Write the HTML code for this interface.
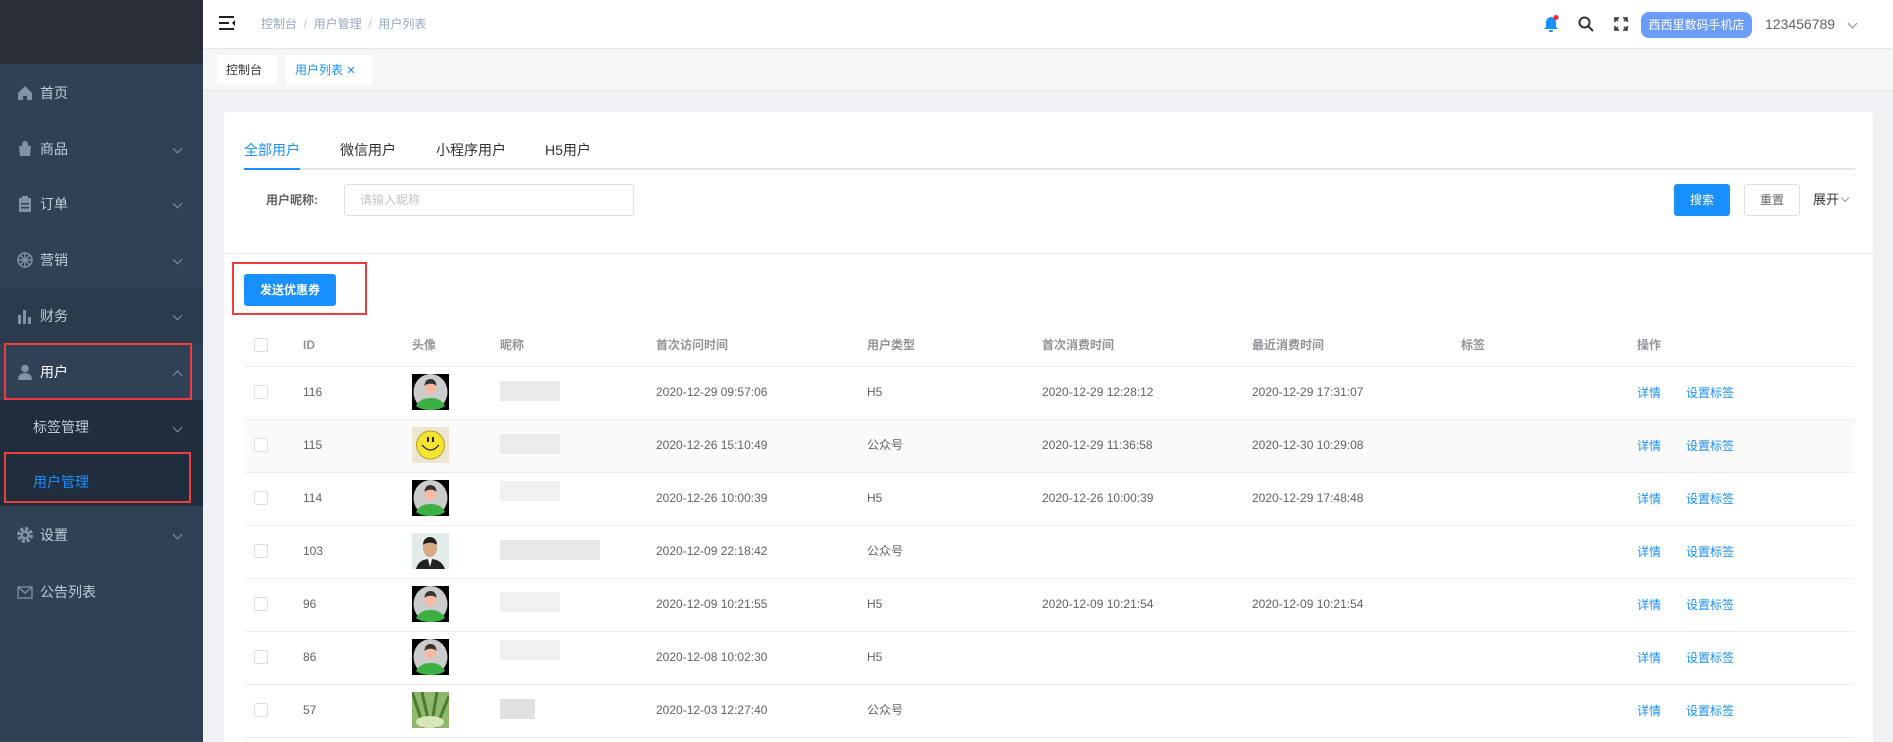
<!DOCTYPE html>
<html style="width:1893px;height:742px;overflow:hidden"><head><meta charset="utf-8"><style>
*{margin:0;padding:0;box-sizing:border-box}
body{width:1893px;height:742px;overflow:hidden;background:#f0f2f5;font-family:"Liberation Sans","Noto Sans CJK SC",sans-serif;position:relative;color:#606266}
.abs{position:absolute}
#side{left:0;top:0;width:203px;height:742px;background:#304156}
#logo{left:0;top:0;width:203px;height:64px;background:#2b2f3a}
.mi{position:absolute;left:0;width:203px;height:56px;line-height:56px;color:#bfcbd9;font-size:14px;padding-left:40px}
.mi .ic{position:absolute;left:17px;top:20px;width:16px;height:16px}
.mi .ar{position:absolute;right:22px;top:24px;width:7px;height:7px;border-right:1px solid #8391a5;border-bottom:1px solid #8391a5;transform:rotate(45deg)}
.mi .ar.up{transform:rotate(-135deg);top:28px}
#sub{left:0;top:400px;width:203px;height:106px;background:#1f2d3d}
.rb{position:absolute;border:2px solid #f03c3c}
#hdr{left:203px;top:0;width:1690px;height:49px;background:#fff;border-bottom:1px solid #e6e6e6;box-shadow:0 1px 3px rgba(0,21,41,.06)}
#tabs{left:203px;top:49px;width:1690px;height:42px;background:#f5f6f8;border-bottom:1px solid #e4e6ea}
.tab{position:absolute;top:6px;height:30px;line-height:30px;background:#fff;font-size:12px;padding:0 9px;color:#333}
#card{left:223px;top:111px;width:1651px;height:631px;background:#fff;border:1px solid #ebeef5;border-bottom:none;border-radius:4px 4px 0 0}
.t{position:absolute;font-size:12px;line-height:14px;white-space:nowrap}
.hd{color:#909399;font-weight:bold}
.line{position:absolute;left:244px;width:1611px;height:1px;background:#ebeef5}
.cb{position:absolute;left:254px;width:14px;height:14px;border:1px solid #dcdfe6;border-radius:2px;background:#fff}
.blue{color:#1890ff}
.av{position:absolute;left:412px;width:37px;height:36px;overflow:hidden}
.blur{position:absolute;height:20px;background:#e6e6e6}
</style></head><body>
<div id="side" class="abs"></div>
<div id="logo" class="abs"></div>
<div id="sub" class="abs"></div>
<div class="mi" style="top:65px;color:#bfcbd9"><svg class="ic" viewBox="0 0 16 16"><path d="M8 1L1 8v7h5v-4h4v4h5V8z" fill="#8391a5"/></svg>首页</div>
<div class="mi" style="top:121px"><svg class="ic" viewBox="0 0 16 16"><path d="M5 5V3a3 3 0 016 0v2h3l-1 10H3L2 5z" fill="#8391a5"/></svg>商品<i class="ar"></i></div>
<div class="mi" style="top:176px"><svg class="ic" viewBox="0 0 16 16"><rect x="2" y="2" width="12" height="14" fill="#8391a5"/><rect x="5" y="0" width="6" height="3" fill="#8391a5"/><rect x="4" y="7" width="8" height="1.5" fill="#304156"/><rect x="4" y="11" width="8" height="1.5" fill="#304156"/></svg>订单<i class="ar"></i></div>
<div class="mi" style="top:232px"><svg class="ic" viewBox="0 0 16 16" fill="none" stroke="#8391a5" stroke-width="1.4"><circle cx="8" cy="8" r="7"/><path d="M8 1v14M1 8h14M3 3l10 10M13 3L3 13"/></svg>营销<i class="ar"></i></div>
<div class="mi" style="top:288px;background:#2b3a4d"><svg class="ic" viewBox="0 0 16 16" fill="#8391a5"><rect x="1" y="7" width="3" height="9"/><rect x="6" y="2" width="3" height="14"/><rect x="11" y="9" width="3" height="7"/></svg>财务<i class="ar"></i></div>
<div class="mi" style="top:344px;color:#fff;background:#304156"><svg class="ic" viewBox="0 0 16 16" fill="#8391a5"><circle cx="8" cy="4.5" r="3.8"/><path d="M1 16c0-5 3-7 7-7s7 2 7 7z"/></svg>用户<i class="ar up"></i></div>
<div class="mi" style="top:400px;padding-left:33px;height:55px;line-height:55px">标签管理<i class="ar"></i></div>
<div class="mi" style="top:455px;padding-left:33px;height:54px;line-height:54px;color:#1890ff">用户管理</div>
<div class="mi" style="top:507px"><svg class="ic" viewBox="0 0 16 16"><circle cx="8" cy="8" r="6" fill="none" stroke="#8391a5" stroke-width="4" stroke-dasharray="3 1.7"/><circle cx="8" cy="8" r="4.5" fill="#8391a5"/><circle cx="8" cy="8" r="2" fill="#304156"/></svg>设置<i class="ar"></i></div>
<div class="mi" style="top:564px"><svg class="ic" viewBox="0 0 16 16" fill="none" stroke="#8391a5" stroke-width="1.3"><rect x="1" y="3" width="14" height="11"/><path d="M1 3l7 6 7-6"/></svg>公告列表</div>
<div class="rb" style="left:4px;top:343px;width:188px;height:57px"></div>
<div class="rb" style="left:4px;top:452px;width:187px;height:51px"></div>

<div id="hdr" class="abs"></div>
<svg class="abs" style="left:219px;top:16px" width="16" height="14" viewBox="0 0 16 14"><rect x="0" y="0" width="15" height="2" fill="#222"/><rect x="0" y="6" width="10" height="2" fill="#222"/><rect x="0" y="12" width="15" height="2" fill="#222"/><path d="M16 4l-3 3 3 3z" fill="#222"/></svg>
<div class="t" style="left:261px;top:17px;font-size:12px;color:#97a8be">控制台 &nbsp;<span style="color:#c0c4cc">/</span>&nbsp; 用户管理 &nbsp;<span style="color:#c0c4cc">/</span>&nbsp; 用户列表</div>
<svg class="abs" style="left:1543px;top:15px" width="16" height="18" viewBox="0 0 16 18"><path d="M8 2a5 5 0 00-5 5v5l-2 2h14l-2-2V7a5 5 0 00-5-5z" fill="#1890ff"/><rect x="6" y="15" width="4" height="2" rx="1" fill="#1890ff"/><circle cx="13" cy="2.5" r="2.5" fill="#f5222d"/></svg>
<svg class="abs" style="left:1578px;top:16px" width="16" height="16" viewBox="0 0 16 16" fill="none" stroke="#333" stroke-width="2"><circle cx="6.5" cy="6.5" r="5"/><path d="M10 10l5 5"/></svg>
<svg class="abs" style="left:1614px;top:17px" width="14" height="14" viewBox="0 0 14 14" fill="none" stroke="#333" stroke-width="1.6"><path d="M1 5V1h4M9 1h4v4M13 9v4H9M5 13H1V9M1 1l3 3M13 1l-3 3M13 13l-3-3M1 13l3-3"/></svg>
<div class="abs" style="left:1641px;top:12px;width:111px;height:26px;border-radius:8px;background:#6a9cf8;color:#fff;font-size:12px;line-height:26px;text-align:center">西西里数码手机店</div>
<div class="t" style="left:1765px;top:17px;font-size:14px;color:#606266">123456789</div>
<i class="abs" style="left:1849px;top:20px;width:7px;height:7px;border-right:1px solid #888;border-bottom:1px solid #888;transform:rotate(45deg)"></i>

<div id="tabs" class="abs"></div>
<div class="tab" style="left:217px;top:55px;width:60px">控制台</div>
<div class="tab" style="left:286px;top:55px;width:86px;color:#1890ff">用户列表 <span style="font-size:11px">✕</span></div>

<div id="card" class="abs"></div>
<div class="t" style="left:244px;top:143px;font-size:14px;color:#1890ff">全部用户</div>
<div class="t" style="left:340px;top:143px;font-size:14px;color:#303133">微信用户</div>
<div class="t" style="left:436px;top:143px;font-size:14px;color:#303133">小程序用户</div>
<div class="t" style="left:545px;top:143px;font-size:14px;color:#303133">H5用户</div>
<div class="abs" style="left:244px;top:168px;width:1611px;height:2px;background:#e4e7ed"></div>
<div class="abs" style="left:244px;top:168px;width:56px;height:2px;background:#1890ff"></div>
<div class="t" style="left:266px;top:193px;font-weight:bold;color:#606266">用户昵称:</div>
<div class="abs" style="left:344px;top:184px;width:290px;height:32px;border:1px solid #dcdfe6;border-radius:3px"></div>
<div class="t" style="left:360px;top:193px;color:#c0c4cc">请输入昵称</div>
<div class="abs" style="left:1674px;top:184px;width:56px;height:32px;background:#1890ff;border-radius:3px;color:#fff;font-size:12px;line-height:32px;text-align:center">搜索</div>
<div class="abs" style="left:1744px;top:184px;width:56px;height:32px;border:1px solid #dcdfe6;border-radius:3px;color:#606266;font-size:12px;line-height:30px;text-align:center">重置</div>
<div class="t" style="left:1813px;top:193px;font-size:13px;color:#333">展开</div>
<i class="abs" style="left:1842px;top:195px;width:6px;height:6px;border-right:1px solid #999;border-bottom:1px solid #999;transform:rotate(45deg)"></i>
<div class="abs" style="left:224px;top:253px;width:1649px;height:1px;background:#e8eaf0"></div>
<div class="abs" style="left:244px;top:274px;width:92px;height:32px;background:#1890ff;border-radius:3px;color:#fff;font-size:12px;font-weight:bold;line-height:32px;text-align:center">发送优惠券</div>
<div class="rb" style="left:232px;top:262px;width:135px;height:53px"></div>

<div class="cb" style="top:338px"></div>
<div class="t hd" style="left:303px;top:338px">ID</div>
<div class="t hd" style="left:412px;top:338px">头像</div>
<div class="t hd" style="left:500px;top:338px">昵称</div>
<div class="t hd" style="left:656px;top:338px">首次访问时间</div>
<div class="t hd" style="left:867px;top:338px">用户类型</div>
<div class="t hd" style="left:1042px;top:338px">首次消费时间</div>
<div class="t hd" style="left:1252px;top:338px">最近消费时间</div>
<div class="t hd" style="left:1461px;top:338px">标签</div>
<div class="t hd" style="left:1637px;top:338px">操作</div>
<div class="line" style="top:366px"></div>

<div class="abs" style="left:244px;top:420px;width:1611px;height:52px;background:#fafafa"></div>

<div class="line" style="top:419px"></div><div class="line" style="top:472px"></div><div class="line" style="top:525px"></div><div class="line" style="top:578px"></div><div class="line" style="top:631px"></div><div class="line" style="top:684px"></div><div class="line" style="top:737px"></div>

<svg width="0" height="0" style="position:absolute"><defs><symbol id="man" viewBox="0 0 37 36"><rect width="37" height="36" fill="#000"/><ellipse cx="18.5" cy="18" rx="17" ry="18" fill="#ccc"/><path d="M4 32c3-6 8-8 14.5-8S30 26 33 32c-4 3-9 4-14.5 4S8 35 4 32z" fill="#3cb043"/><ellipse cx="18.5" cy="13" rx="5.5" ry="7" fill="#f8b9a0"/><path d="M12.5 12c0-5 3-7 6-7s6 2 6 7c-2-3-10-3-12 0z" fill="#333"/></symbol></defs></svg>

<div class="cb" style="top:385px"></div><div class="t" style="left:303px;top:385px">116</div>
<svg class="av" style="top:374px" viewBox="0 0 37 36"><use href="#man"/></svg>
<div class="blur" style="left:500px;top:381px;width:60px;background:#eaeaea"></div>
<div class="t" style="left:656px;top:385px">2020-12-29 09:57:06</div><div class="t" style="left:867px;top:385px">H5</div>
<div class="t" style="left:1042px;top:385px">2020-12-29 12:28:12</div><div class="t" style="left:1252px;top:385px">2020-12-29 17:31:07</div>
<div class="t blue" style="left:1637px;top:386px">详情</div><div class="t blue" style="left:1686px;top:386px">设置标签</div>

<div class="cb" style="top:438px"></div><div class="t" style="left:303px;top:438px">115</div>
<svg class="av" style="top:427px" viewBox="0 0 37 36"><rect width="37" height="36" fill="#ece6d2"/><circle cx="18.5" cy="18" r="14" fill="#f5e332" stroke="#b8a020"/><rect x="15" y="10" width="2" height="5" fill="#222"/><rect x="20" y="10" width="2" height="5" fill="#222"/><path d="M10 18q8.5 10 17 0" fill="none" stroke="#222" stroke-width="1.3"/></svg>
<div class="blur" style="left:500px;top:434px;width:60px;background:#ececec"></div>
<div class="t" style="left:656px;top:438px">2020-12-26 15:10:49</div><div class="t" style="left:867px;top:438px">公众号</div>
<div class="t" style="left:1042px;top:438px">2020-12-29 11:36:58</div><div class="t" style="left:1252px;top:438px">2020-12-30 10:29:08</div>
<div class="t blue" style="left:1637px;top:439px">详情</div><div class="t blue" style="left:1686px;top:439px">设置标签</div>

<div class="cb" style="top:491px"></div><div class="t" style="left:303px;top:491px">114</div>
<svg class="av" style="top:480px" viewBox="0 0 37 36"><use href="#man"/></svg>
<div class="blur" style="left:500px;top:481px;width:60px;background:#f0f0f0"></div>
<div class="t" style="left:656px;top:491px">2020-12-26 10:00:39</div><div class="t" style="left:867px;top:491px">H5</div>
<div class="t" style="left:1042px;top:491px">2020-12-26 10:00:39</div><div class="t" style="left:1252px;top:491px">2020-12-29 17:48:48</div>
<div class="t blue" style="left:1637px;top:492px">详情</div><div class="t blue" style="left:1686px;top:492px">设置标签</div>

<div class="cb" style="top:544px"></div><div class="t" style="left:303px;top:544px">103</div>
<svg class="av" style="top:533px" viewBox="0 0 37 36"><rect width="37" height="36" fill="#e4ecea"/><path d="M4 36c2-8 8-10 14-10s12 2 15 10z" fill="#222"/><ellipse cx="18" cy="15" rx="7" ry="9" fill="#d9a988"/><path d="M11 12c0-6 4-8 7-8s7 2 7 8c-3-3-11-3-14 0z" fill="#222"/><path d="M16 26l2 8 2-8z" fill="#fff"/></svg>
<div class="blur" style="left:500px;top:540px;width:100px;background:#e8e8e8"></div>
<div class="t" style="left:656px;top:544px">2020-12-09 22:18:42</div><div class="t" style="left:867px;top:544px">公众号</div>
<div class="t blue" style="left:1637px;top:545px">详情</div><div class="t blue" style="left:1686px;top:545px">设置标签</div>

<div class="cb" style="top:597px"></div><div class="t" style="left:303px;top:597px">96</div>
<svg class="av" style="top:586px" viewBox="0 0 37 36"><use href="#man"/></svg>
<div class="blur" style="left:500px;top:592px;width:60px;background:#f0f0f0"></div>
<div class="t" style="left:656px;top:597px">2020-12-09 10:21:55</div><div class="t" style="left:867px;top:597px">H5</div>
<div class="t" style="left:1042px;top:597px">2020-12-09 10:21:54</div><div class="t" style="left:1252px;top:597px">2020-12-09 10:21:54</div>
<div class="t blue" style="left:1637px;top:598px">详情</div><div class="t blue" style="left:1686px;top:598px">设置标签</div>

<div class="cb" style="top:650px"></div><div class="t" style="left:303px;top:650px">86</div>
<svg class="av" style="top:639px" viewBox="0 0 37 36"><use href="#man"/></svg>
<div class="blur" style="left:500px;top:640px;width:60px;background:#f0f0f0"></div>
<div class="t" style="left:656px;top:650px">2020-12-08 10:02:30</div><div class="t" style="left:867px;top:650px">H5</div>
<div class="t blue" style="left:1637px;top:651px">详情</div><div class="t blue" style="left:1686px;top:651px">设置标签</div>

<div class="cb" style="top:703px"></div><div class="t" style="left:303px;top:703px">57</div>
<svg class="av" style="top:692px" viewBox="0 0 37 36"><rect width="37" height="36" fill="#8fb86a"/><path d="M0 0l12 36M10 0l8 36M25 0l-6 36M37 4L24 36" stroke="#4d7a32" stroke-width="3"/><ellipse cx="18" cy="30" rx="14" ry="6" fill="#d8e6b8"/></svg>
<div class="blur" style="left:500px;top:699px;width:35px;background:#e0e0e0"></div>
<div class="t" style="left:656px;top:703px">2020-12-03 12:27:40</div><div class="t" style="left:867px;top:703px">公众号</div>
<div class="t blue" style="left:1637px;top:704px">详情</div><div class="t blue" style="left:1686px;top:704px">设置标签</div>
</body></html>
